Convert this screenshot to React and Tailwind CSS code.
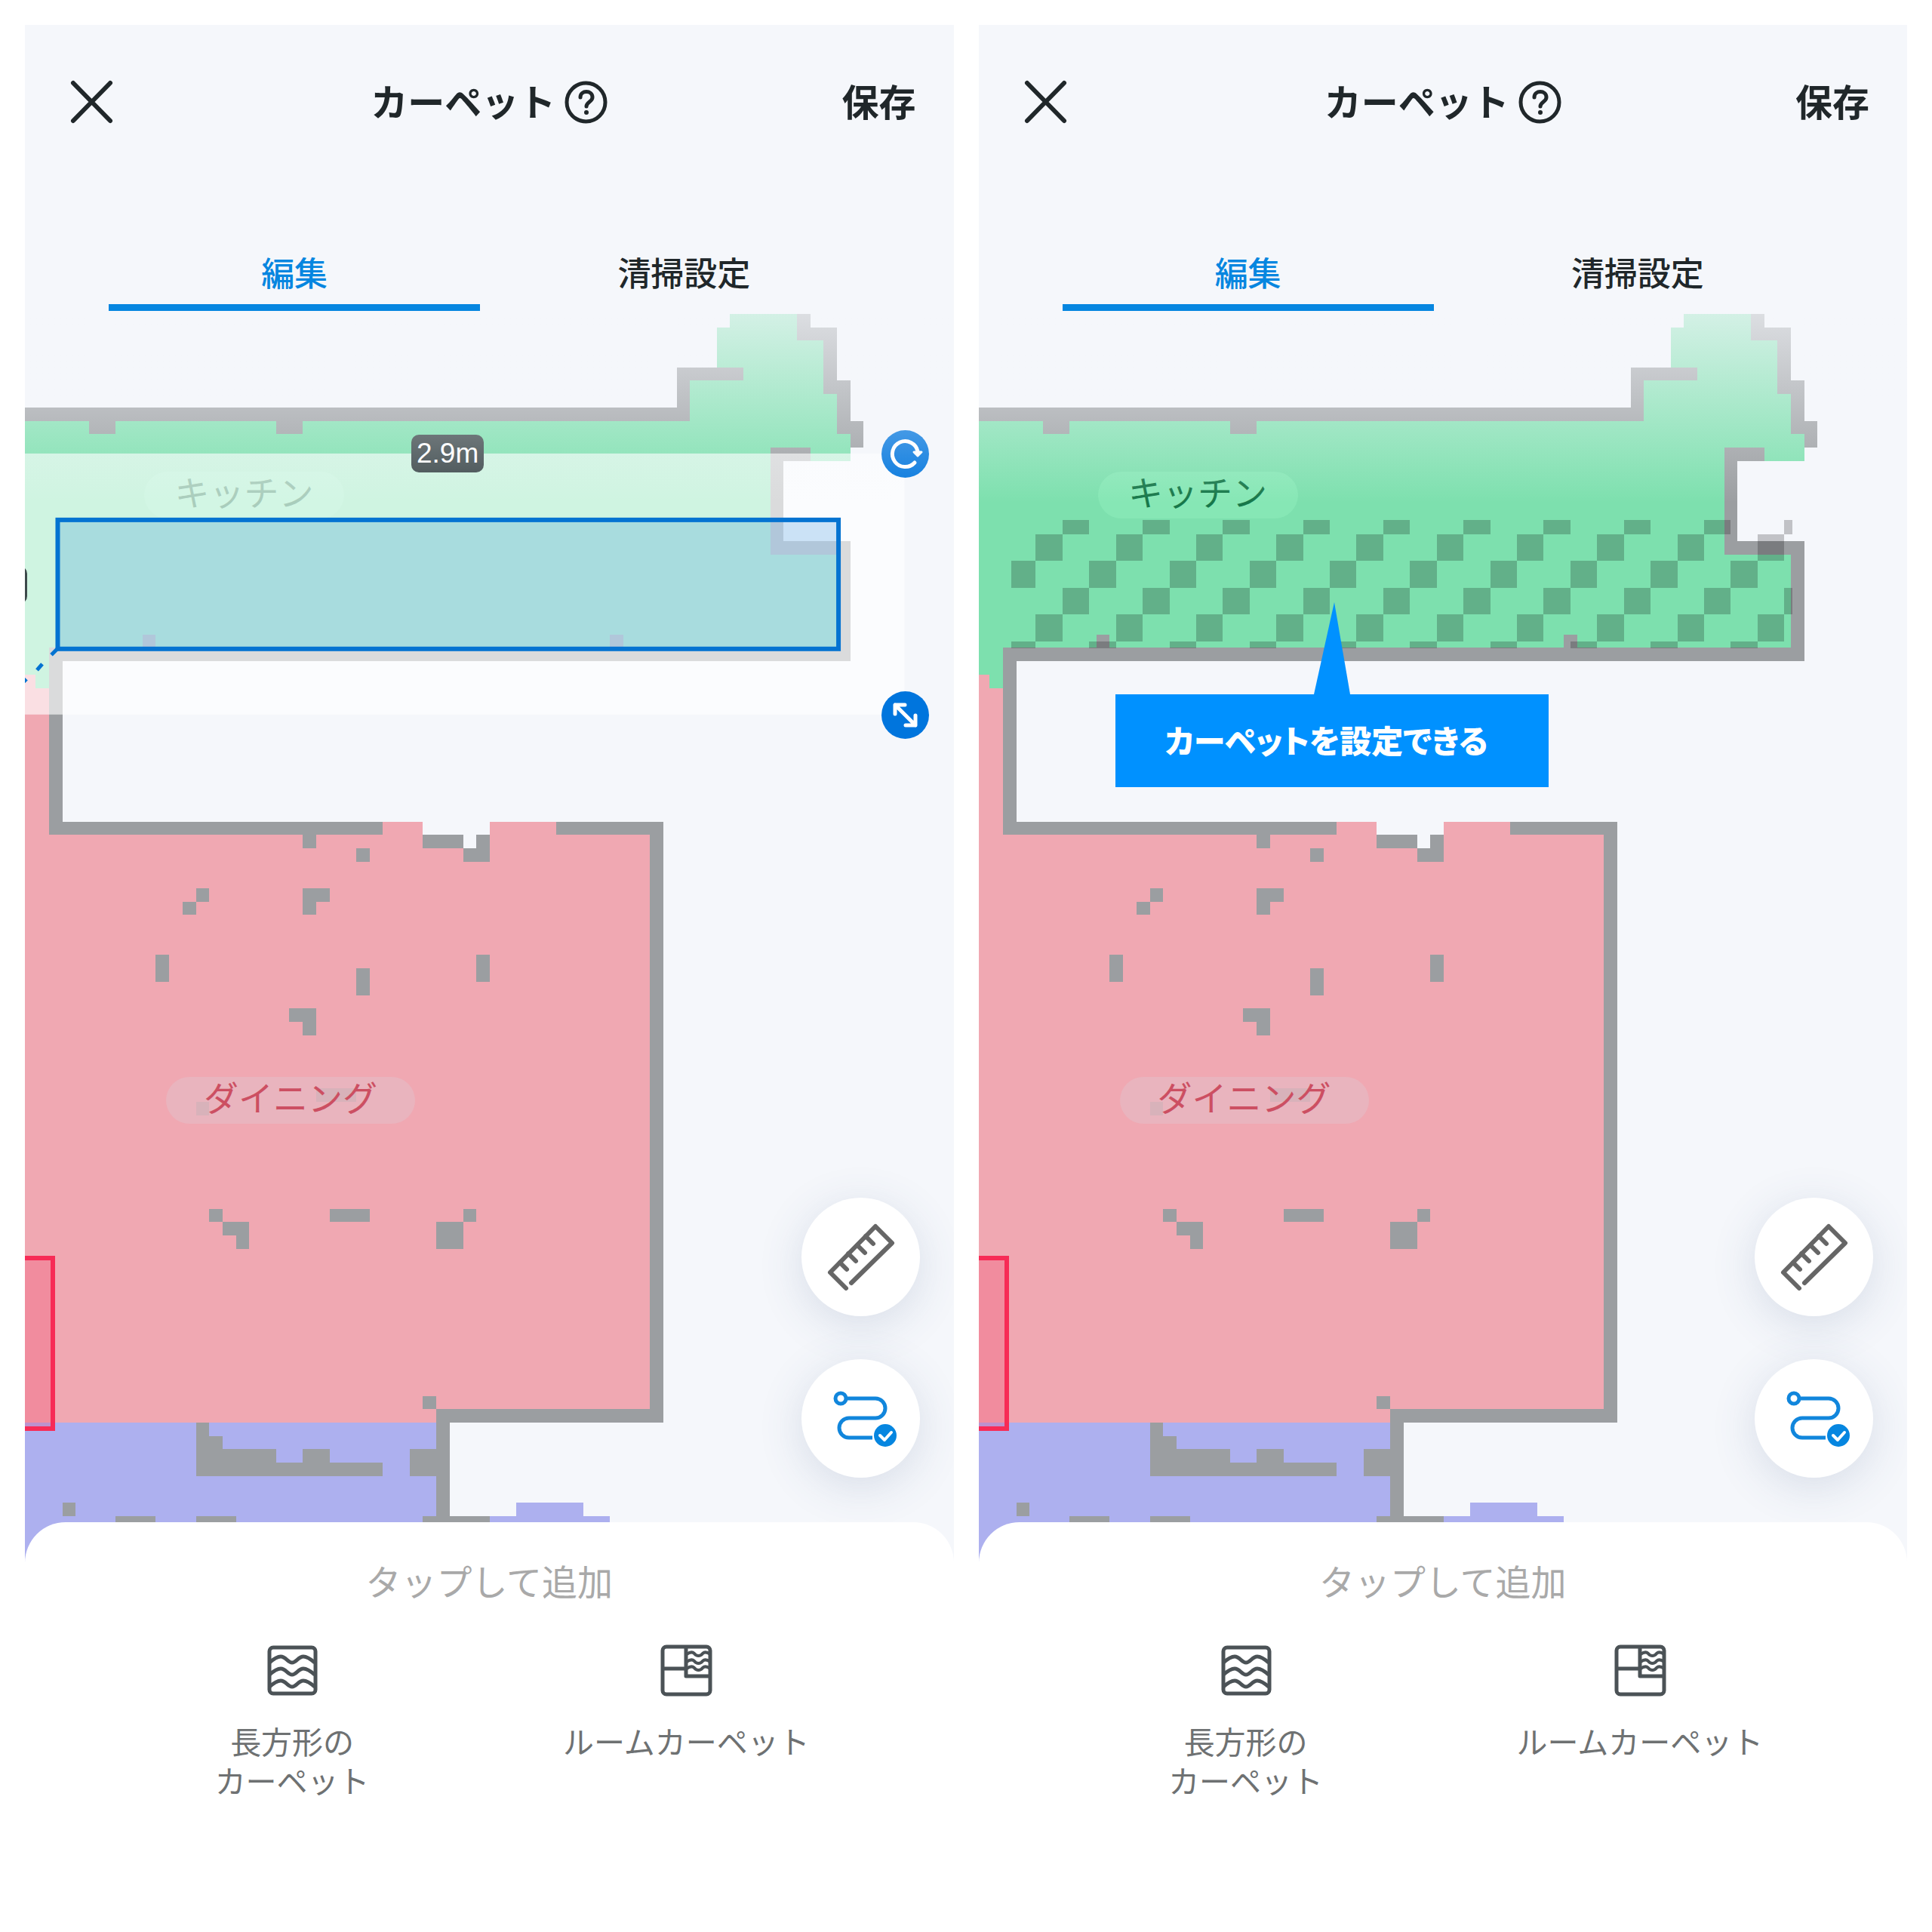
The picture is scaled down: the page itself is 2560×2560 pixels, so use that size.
const INK = "text-[#20272a]";

/* Map cells as [column, row, width, height]. */
const KITCHEN = [
  [53, 0, 5, 1], [52, 1, 8, 3], [50, 4, 10, 2], [50, 6, 11, 3],
  [-1, 8, 62, 1], [-1, 9, 63, 2], [-1, 11, 57, 7], [-1, 18, 62, 7],
  [-1, 25, 3, 2], [1, 27, 1, 1],
];
const DINING = [[-1, 27, 2, 1], [-1, 28, 3, 11], [27, 38, 3, 2], [35, 38, 5, 1], [-1, 39, 48, 44]];
const LIVING = [[-1, 83, 32, 12], [35, 90, 9, 5], [37, 89, 5, 1]];
const GAPS = [[30, 38, 5, 1], [33, 39, 1, 1]];
const WALLS = [
  [58, 0, 1, 2], [59, 1, 2, 1], [60, 1, 1, 5], [61, 5, 1, 4], [62, 8, 1, 2],
  [49, 4, 5, 1], [49, 4, 1, 4], [-1, 7, 51, 1], [5, 8, 2, 1], [19, 8, 2, 1],
  [56, 10, 3, 1], [56, 10, 1, 8], [56, 17, 6, 1], [61, 17, 1, 9], [2, 25, 60, 1],
  [9, 24, 1, 1], [44, 24, 1, 1], [2, 25, 1, 14], [2, 38, 25, 1], [40, 38, 8, 1],
  [47, 38, 1, 45], [21, 39, 1, 1], [30, 39, 3, 1], [34, 39, 1, 2], [33, 40, 2, 1],
  [25, 40, 1, 1], [13, 43, 1, 1], [12, 44, 1, 1], [21, 43, 2, 1], [21, 44, 1, 1],
  [10, 48, 1, 2], [34, 48, 1, 2], [25, 49, 1, 2], [20, 52, 2, 1], [21, 53, 1, 1],
  [13, 59, 1, 1], [22, 58, 3, 1], [14, 67, 1, 1], [15, 68, 2, 1], [16, 69, 1, 1],
  [23, 67, 3, 1], [31, 68, 2, 2], [33, 67, 1, 1], [30, 81, 1, 1], [31, 82, 17, 1],
  [31, 82, 1, 13], [13, 83, 1, 4], [14, 84, 1, 3], [15, 85, 4, 2], [19, 86, 8, 1],
  [21, 85, 2, 1], [29, 85, 2, 2], [3, 89, 1, 1], [7, 90, 3, 1], [13, 90, 3, 1], [30, 90, 5, 5],
];

/* Top edge, height and first column of each band of the carpet texture. */
const CARPET_ROWS = [
  [273, 19, 2], [292, 35, 1], [327, 36, 0], [363, 35, 2], [398, 36, 1], [434, 9, 0],
];

function Cells({ cells, fill }) {
  return (
    <g fill={fill}>
      {cells.map(([x, y, w, h]) => (
        <rect key={`${x}-${y}-${w}-${h}`} x={x} y={y} width={w} height={h} />
      ))}
    </g>
  );
}

function CarpetTexture() {
  const tiles = [];
  CARPET_ROWS.forEach(([y, h, first]) => {
    for (let i = first; i < 30; i += 3) {
      const x = Math.max(43, Math.round(40 + i * 35.42));
      const end = Math.min(1078, Math.round(40 + (i + 1) * 35.42));
      if (end > x) tiles.push(<rect key={`${x}-${y}`} x={x} y={y} width={end - x} height={h} />);
    }
  });
  return <g fill="#000" fillOpacity="0.21">{tiles}</g>;
}

function FloorMap({ children }) {
  return (
    <svg viewBox="0 0 1231 1660" className="block h-auto w-full" shapeRendering="crispEdges" aria-hidden="true">
      <g transform="translate(-3.5 0) scale(17.705)">
        <Cells cells={DINING} fill="#f0a8b2" />
        <Cells cells={KITCHEN} fill="#7de0ae" />
        <Cells cells={LIVING} fill="#adb0ef" />
        <Cells cells={GAPS} fill="#f5f7fb" />
        <Cells cells={WALLS} fill="#9b9ea1" />
      </g>
      {children}
      <rect x="-20" y="1252" width="57" height="226" fill="#f72b56" fillOpacity="0.22" stroke="#f72b56" strokeWidth="6" />
    </svg>
  );
}

function RoomLabel({ className, children }) {
  return (
    <span className={`absolute flex h-[62px] items-center justify-center rounded-full pb-1 text-[46px] leading-none ${className}`}>
      {children}
    </span>
  );
}

function RoundHandle({ label, className, children }) {
  return (
    <button type="button" aria-label={label} className={`absolute size-[63px] rounded-full bg-[#0075dd] ${className}`}>
      <svg viewBox="0 0 63 63" fill="none" stroke="#fff" strokeWidth="5" strokeLinecap="round" strokeLinejoin="round">
        {children}
      </svg>
    </button>
  );
}

function SelectionOverlay() {
  return (
    <>
      <svg viewBox="0 0 1231 1660" className="absolute inset-x-0 top-0 h-auto w-full" aria-hidden="true">
        <rect x="0" y="185" width="1166" height="346" fill="#fff" fillOpacity="0.63" />
        <rect x="43" y="273" width="1035" height="171" fill="#0073d7" fillOpacity="0.19" />
        <rect x="43.500" y="273" width="1035" height="171" fill="none" stroke="#0473d1" strokeWidth="6" />
        <path d="M43 444L35 452M23 464L16 472M2 484L-6 492" stroke="#0473d1" strokeWidth="5" fill="none" />
      </svg>
      <span className="absolute left-[512px] top-[160px] flex h-[50px] items-center rounded-[10px] bg-[#3d494b] px-[7px] pb-[2px] text-[37px] leading-none text-white">
        2.9m
      </span>
      <div className="absolute left-0 top-[334px] h-[50px] w-8 -translate-x-[29px] rounded-[10px] bg-[#3d494b]" />
      <RoundHandle label="回転" className="right-[33px] top-[154px]">
        <path d="M44 43A17 17 0 1 1 48 28" />
        <path d="M43 29H53L48 34Z" fill="#fff" strokeWidth="3" />
      </RoundHandle>
      <RoundHandle label="サイズ変更" className="right-[33px] top-[500px]">
        <path d="M18 18L45 45M18 30V18H31M45 32V45H32" />
      </RoundHandle>
    </>
  );
}

function Callout() {
  return (
    <div className="absolute left-[181px] top-[382px] flex w-[574px] flex-col">
      <svg viewBox="0 0 574 122" className="block h-[122px] w-full" aria-hidden="true">
        <path d="M290 0L311 122H263Z" fill="#0091ff" />
      </svg>
      <p className="flex h-[123px] items-center bg-[#0091ff] pl-[66px] pt-1 text-[42px] font-black leading-none text-white [font-feature-settings:'palt']">
        カーペットを設定できる
      </p>
    </div>
  );
}

function RulerIcon() {
  return (
    <svg viewBox="0 0 157 157" fill="none" stroke="#666" strokeWidth="6" strokeLinecap="round" strokeLinejoin="round">
      <path d="M59 120L38 99L98 38L120 60L66 113" />
      <path d="M51 86l9 9M62 74l10 10M74 63l10 10M85 51l10 10" />
    </svg>
  );
}

function RouteIcon() {
  return (
    <svg viewBox="0 0 157 157" fill="none" stroke="#1186dc" strokeWidth="5">
      <circle cx="52" cy="52" r="7" />
      <path d="M60 52H98a13 13 0 0 1 0 26H63a13 13 0 0 0 0 26H94" />
      <circle cx="111" cy="101" r="15" fill="#0686e0" stroke="none" />
      <path d="M104 101l6 6 9-10" stroke="#fff" strokeWidth="4" strokeLinecap="round" strokeLinejoin="round" />
    </svg>
  );
}

function RectCarpetIcon() {
  const wave = "C12 -6 17 -8 20 -8C27 -8 29 0 35 0C41 0 43 -8 50 -8C54 -8 58 -6 65 0";
  return (
    <svg viewBox="0 0 70 70" className="size-[70px]" fill="none" stroke="#4b5256" strokeWidth="5">
      <rect x="5" y="5" width="61" height="61" rx="5" />
      {[25, 41, 57].map((y) => (
        <path key={y} transform={`translate(0 ${y})`} d={`M5 0${wave}`} />
      ))}
    </svg>
  );
}

function RoomCarpetIcon() {
  return (
    <svg viewBox="0 0 70 70" className="size-[70px]" fill="none" stroke="#4b5256" strokeWidth="5">
      <rect x="4" y="4" width="63" height="63" rx="5" />
      <path d="M4 33H35M35 4V43H66" strokeLinejoin="round" />
      {[14, 24, 33].map((y) => (
        <path key={y} transform={`translate(0 ${y})`} d="M36 0C40 -3 43 -4 46 -1C49 3 54 3 57 -1C60 -4 63 -3 67 0" strokeWidth="4" />
      ))}
    </svg>
  );
}

function FloatingButton({ label, children }) {
  return (
    <button type="button" aria-label={label} className="size-[157px] rounded-full bg-white shadow-[0_12px_60px_rgba(60,90,130,0.16)]">
      {children}
    </button>
  );
}

function AddButton({ icon, children }) {
  return (
    <button type="button" className="flex flex-col items-center gap-9 text-[41px] leading-[52px] text-[#6e7172]">
      {icon}
      <span>{children}</span>
    </button>
  );
}

function Screen({ selecting = false }) {
  return (
    <section className="flex min-w-0 flex-1 flex-col overflow-hidden bg-[#f5f7fb]">
      <header className={`grid grid-cols-[1fr_auto_1fr] items-center px-[50px] pt-16 ${INK}`}>
        <button type="button" aria-label="閉じる" className="size-[72px]">
          <svg viewBox="0 0 72 72" fill="none" stroke="currentColor" strokeWidth="6" strokeLinecap="round">
            <path d="M14 11L63 61M63 11L14 61" />
          </svg>
        </button>
        <div className="flex items-center gap-3">
          <h1 className="pt-1 text-[49px] font-bold leading-[72px]">カーペット</h1>
          <button type="button" aria-label="ヘルプ" className="size-[57px]">
            <svg viewBox="0 0 57 57" fill="none" stroke="currentColor" strokeWidth="5" strokeLinecap="round">
              <circle cx="28.500" cy="28.500" r="25.500" />
              <path d="M21 22c0-10 16-10 16 0c0 6-8 6-8 12" />
              <circle cx="29" cy="42" r="3" fill="currentColor" stroke="none" />
            </svg>
          </button>
        </div>
        <button type="button" className="justify-self-end pt-1 text-[49px] font-bold leading-[72px]">保存</button>
      </header>

      <div role="tablist" className="mt-[158px] flex gap-6 px-[111px] text-[44px] font-medium leading-[66px]">
        <button type="button" role="tab" aria-selected="true" className="flex-1 border-b-[9px] border-[#0686e0] pb-[6px] text-[#0686e0]">
          編集
        </button>
        <button type="button" role="tab" aria-selected="false" className={`flex-1 border-b-[9px] border-transparent pb-[6px] ${INK}`}>
          清掃設定
        </button>
      </div>

      <div className="relative mt-1">
        <FloorMap>{!selecting && <CarpetTexture />}</FloorMap>
        <RoomLabel className="left-[158px] top-[209px] w-[265px] bg-[#88e8b7]/80 text-[#17784a]">キッチン</RoomLabel>
        <RoomLabel className="left-[187px] top-[1011px] w-[330px] bg-[#e7b6c1]/80 text-[#cc4f62]">ダイニング</RoomLabel>
        {selecting && <SelectionOverlay />}
        <div className="pointer-events-none absolute inset-x-0 top-0 h-[250px] bg-linear-to-b from-[#f5f7fb]/72 to-[#f5f7fb]/0" />
        {!selecting && <Callout />}
        <div className="absolute right-[45px] top-[1171px] flex flex-col gap-[57px]">
          <FloatingButton label="定規"><RulerIcon /></FloatingButton>
          <FloatingButton label="清掃ルート"><RouteIcon /></FloatingButton>
        </div>
      </div>

      <footer className="relative -mt-[58px] flex flex-1 flex-col items-center rounded-t-[54px] bg-white pt-12">
        <p className="text-[47px] leading-[66px] text-[#a9a9a9]">タップして追加</p>
        <div className="mt-[47px] grid w-full grid-cols-2 items-start px-[93px]">
          <AddButton icon={<RectCarpetIcon />}>長方形の<br />カーペット</AddButton>
          <AddButton icon={<RoomCarpetIcon />}>ルームカーペット</AddButton>
        </div>
      </footer>
    </section>
  );
}

export default function App() {
  return (
    <main lang="ja" className="flex min-h-screen gap-[33px] bg-white p-[33px] font-['Liberation_Sans','Noto_Sans_CJK_JP',sans-serif]">
      <Screen selecting />
      <Screen />
    </main>
  );
}
